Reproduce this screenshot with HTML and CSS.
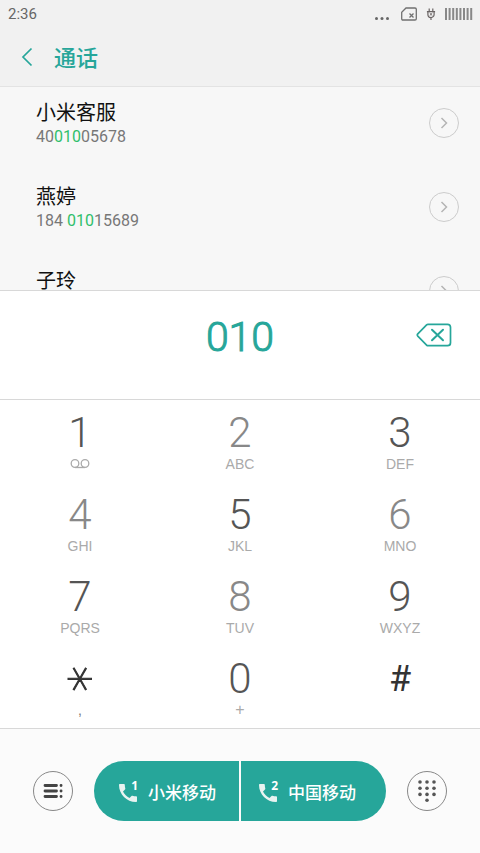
FILE: index.html
```html
<!DOCTYPE html>
<html lang="zh-CN">
<head>
<meta charset="utf-8">
<meta name="viewport" content="width=device-width, initial-scale=1">
<title>通话</title>
<link rel="stylesheet" href="styles.css">
</head>
<body>
<div class="app">
  <header class="top">
    <div class="status">
      <time>2:36</time>
      <div class="status-icons">
        <svg width="16" height="16" viewBox="0 0 16 16" fill="#666" aria-hidden="true"><circle cx="2.500" cy="12.500" r="1.500"/><circle cx="8" cy="12.500" r="1.500"/><circle cx="13.500" cy="12.500" r="1.500"/></svg>
        <svg class="sim" width="18" height="16" viewBox="0 0 18 16" fill="none" stroke="#707070" stroke-width="1.300" aria-hidden="true"><path d="M6 2h9q1.300 0 1.300 1.300v9.400q0 1.300-1.300 1.300H3q-1.300 0-1.300-1.300V6.300z"/><path d="M9.500 7.500l4 4M13.500 7.500l-4 4"/></svg>
        <svg class="plug" width="10" height="14" viewBox="0 0 10 14" fill="none" stroke="#6a6464" stroke-width="1.200" aria-hidden="true"><path d="M3.200 1.500v3M6.800 1.500v3M.9 4.600h8.200M1.900 5v2.500a3.100 3.100 0 0 0 6.200 0V5M5 10.500V13"/><path d="M3.700 6l2.600 2.600M6.300 6L3.700 8.600" stroke-width=".9"/></svg>
        <svg class="battery" width="28" height="12" viewBox="0 0 28 12" stroke="#888" stroke-width="2" aria-hidden="true"><path d="M1 0v12M4.600 0v12M8.200 0v12M11.800 0v12M15.400 0v12M19 0v12M22.600 0v12M26.200 0v12"/></svg>
      </div>
    </div>
    <div class="title-bar">
      <button class="back" type="button" aria-label="返回"><svg width="12" height="20" viewBox="0 0 12 20" fill="none" stroke="#26a69a" stroke-width="1.700"><path d="M10.500 1.500L2 10l8.500 8.500"/></svg></button>
      <h1>通话</h1>
    </div>
  </header>

  <ul class="contacts">
    <li class="contact">
      <div class="who"><span class="name">小米客服</span><span class="number">40<mark>010</mark>05678</span></div>
      <button class="detail" type="button" aria-label="详情"><svg width="8" height="12" viewBox="0 0 8 12"><path d="M1.500 1l5 5-5 5"/></svg></button>
    </li>
    <li class="contact">
      <div class="who"><span class="name">燕婷</span><span class="number">184 <mark>010</mark>15689</span></div>
      <button class="detail" type="button" aria-label="详情"><svg width="8" height="12" viewBox="0 0 8 12"><path d="M1.500 1l5 5-5 5"/></svg></button>
    </li>
    <li class="contact">
      <div class="who"><span class="name">子玲</span></div>
      <button class="detail" type="button" aria-label="详情"><svg width="8" height="12" viewBox="0 0 8 12"><path d="M1.500 1l5 5-5 5"/></svg></button>
    </li>
  </ul>

  <section class="entry">
    <output class="digits">010</output>
    <button class="erase" type="button" aria-label="删除"><svg width="36" height="24" viewBox="0 0 36 24" fill="none" stroke="#26a69a" stroke-width="1.700" stroke-linejoin="round" stroke-linecap="round"><path d="M12 1.300h19.500q3 0 3 3v15.400q0 3-3 3H12q-.8 0-1.400-.6L1.800 13.100q-1-1.100 0-2.200L10.600 1.900q.6-.6 1.400-.6z"/><path d="M16 6.700l11 10.600M27 6.700L16 17.300" stroke-width="2"/></svg></button>
  </section>

  <section class="keypad">
    <button class="key" type="button"><span class="digit">1</span><span class="sub"><svg width="20" height="10" viewBox="0 0 20 10" fill="none" stroke="#aaa" stroke-width="1.300" aria-hidden="true"><circle cx="5" cy="4.500" r="3.800"/><circle cx="15" cy="4.500" r="3.800"/><path d="M5 8.500H15"/></svg></span></button>
    <button class="key pale" type="button"><span class="digit">2</span><span class="sub">ABC</span></button>
    <button class="key" type="button"><span class="digit">3</span><span class="sub">DEF</span></button>
    <button class="key pale" type="button"><span class="digit">4</span><span class="sub">GHI</span></button>
    <button class="key" type="button"><span class="digit">5</span><span class="sub">JKL</span></button>
    <button class="key pale" type="button"><span class="digit">6</span><span class="sub">MNO</span></button>
    <button class="key" type="button"><span class="digit">7</span><span class="sub">PQRS</span></button>
    <button class="key pale" type="button"><span class="digit">8</span><span class="sub">TUV</span></button>
    <button class="key" type="button"><span class="digit">9</span><span class="sub">WXYZ</span></button>
    <button class="key" type="button"><span class="digit star"><span class="turn">*</span></span><span class="sub comma">,</span></button>
    <button class="key" type="button"><span class="digit">0</span><span class="sub plus">+</span></button>
    <button class="key" type="button"><span class="digit hash">#</span><span class="sub"></span></button>
  </section>

  <footer class="actions">
    <button class="round" type="button" aria-label="菜单"><svg width="20" height="16" viewBox="0 0 20 16" stroke="#444" stroke-width="2.800" stroke-linecap="round"><path d="M2 2.500h11.500M2 8h11.500M2 13.500h11.500M18 2.500h.1M18 8h.1M18 13.500h.1"/></svg></button>
    <div class="calls">
      <button class="call" type="button">
        <span class="phone"><svg width="20" height="20" viewBox="2 2 20 20" fill="#e8f3f1" aria-hidden="true"><path d="M7 10.500c1.400 2.800 3.700 5.100 6.500 6.500l2-2c.3-.3.700-.4 1-.3 1.100.4 2.300.5 3.500.5.600 0 1 .5 1 1V20c0 .600-.4 1-1 1C10.600 21 3 13.400 3 4c0-.600.400-1 1-1h3.800c.6 0 1 .4 1 1 0 1.200.2 2.400.5 3.500.1.400 0 .8-.3 1z"/></svg><b>1</b></span>
        <span>小米移动</span>
      </button>
      <button class="call second" type="button">
        <span class="phone"><svg width="20" height="20" viewBox="2 2 20 20" fill="#e8f3f1" aria-hidden="true"><path d="M7 10.500c1.400 2.800 3.700 5.100 6.500 6.500l2-2c.3-.3.700-.4 1-.3 1.100.4 2.300.5 3.500.5.600 0 1 .5 1 1V20c0 .600-.4 1-1 1C10.600 21 3 13.400 3 4c0-.600.400-1 1-1h3.800c.6 0 1 .4 1 1 0 1.200.2 2.400.5 3.500.1.400 0 .8-.3 1z"/></svg><b>2</b></span>
        <span>中国移动</span>
      </button>
    </div>
    <button class="round" type="button" aria-label="拨号盘"><svg width="20" height="24" viewBox="0 0 20 24" fill="#555"><circle cx="3" cy="3" r="1.800"/><circle cx="10" cy="3" r="1.800"/><circle cx="17" cy="3" r="1.800"/><circle cx="3" cy="9.200" r="1.800"/><circle cx="10" cy="9.200" r="1.800"/><circle cx="17" cy="9.200" r="1.800"/><circle cx="3" cy="15.400" r="1.800"/><circle cx="10" cy="15.400" r="1.800"/><circle cx="17" cy="15.400" r="1.800"/><circle cx="10" cy="21.300" r="1.800"/></svg></button>
  </footer>
</div>
</body>
</html>
```
FILE: styles.css
```css
* { box-sizing: border-box; }

body {
  margin: 0;
  font-family: Roboto, "Noto Sans CJK SC", sans-serif;
  color: #111;
  background: #fff;
}

button {
  border: 0;
  padding: 0;
  background: none;
  font: inherit;
  color: inherit;
}

svg { display: block; }

.app {
  display: flex;
  flex-direction: column;
  height: 100vh;
}

.top {
  background: #f1f1f1;
  border-bottom: 1px solid #e3e3e3;
}

.status {
  display: flex;
  justify-content: space-between;
  align-items: center;
  height: 28px;
  padding: 0 7px 0 8px;
  font-size: 15px;
  color: #666;
}

.status-icons { display: flex; align-items: center; }
.sim { margin-left: 10px; }
.plug { margin-left: 8px; }
.battery { margin-left: 9px; }

.title-bar {
  display: flex;
  align-items: center;
  gap: 21px;
  height: 58px;
  padding: 0 21px;
}

.title-bar h1 {
  margin: 0;
  padding-top: 4px;
  font-size: 22px;
  font-weight: 500;
  line-height: 32px;
  color: #26a69a;
}

.contacts {
  flex: 1 1 0;
  min-height: 0;
  margin: 0;
  padding: 0;
  overflow: hidden;
  list-style: none;
  background: #f7f7f7;
}

.contact {
  display: flex;
  justify-content: space-between;
  align-items: flex-start;
  height: 84px;
  padding: 13px 21px 0 36px;
}

.who { display: flex; flex-direction: column; }
.name { font-size: 20px; line-height: 26px; }
.number { font-size: 16px; line-height: 22px; color: #777; }
.number mark { background: none; color: #2fbf6b; }

.detail {
  display: grid;
  place-items: center;
  width: 30px;
  height: 30px;
  margin-top: 8px;
  border: 1px solid #ccc;
  border-radius: 50%;
}

.detail path { fill: none; stroke: #b4b4b4; stroke-width: 1.5px; }

.entry {
  display: grid;
  grid-template-columns: 1fr auto 1fr;
  align-items: center;
  height: 109px;
  padding: 0 28px 20px;
  border-top: 1px solid #d8d8d8;
}

.digits {
  grid-column: 2;
  padding-top: 4px;
  font-size: 41px;
  font-weight: 300;
  line-height: 56px;
  color: #26a69a;
  -webkit-text-stroke: 1px #26a69a;
}

.erase { justify-self: end; }

.keypad {
  display: grid;
  grid-template-columns: repeat(3, 1fr);
  grid-auto-rows: 82px;
  border-top: 1px solid #d8d8d8;
  border-bottom: 1px solid #d8d8d8;
}

.key {
  display: flex;
  flex-direction: column;
  align-items: center;
  justify-content: flex-start;
  padding-top: 9px;
  color: #555;
}

.key.pale { color: #888; }

.digit {
  height: 47px;
  font-size: 42px;
  font-weight: 300;
  line-height: 48px;
}

.sub {
  display: flex;
  align-items: center;
  height: 16px;
  font-family: "Liberation Sans", sans-serif;
  font-size: 14px;
  line-height: 16px;
  color: #aaa;
}

.plus { font-size: 16px; }
.comma { color: #777; }

.star {
  font-family: "DejaVu Sans", sans-serif;
  font-size: 52px;
  font-weight: 200;
  color: #333;
  -webkit-text-stroke: 1px #333;
}

.turn {
  display: block;
  height: 48px;
  line-height: 66px;
  transform: rotate(90deg);
}

.hash { font-size: 36px; font-weight: 400; color: #333; }

.actions {
  display: flex;
  align-items: center;
  justify-content: space-between;
  gap: 21px;
  height: 124px;
  padding: 0 33px;
  background: #fbfbfb;
}

.round {
  display: grid;
  place-items: center;
  flex: none;
  width: 40px;
  height: 40px;
  border: 1px solid #888;
  border-radius: 50%;
}

.calls {
  flex: 1;
  display: grid;
  grid-template-columns: 1fr 1fr;
  gap: 2px;
  height: 60px;
  border-radius: 30px;
  overflow: hidden;
}

.call {
  display: flex;
  align-items: center;
  gap: 10px;
  padding-left: 24px;
  background: #26a69a;
  color: #fff;
  font-size: 17px;
  font-weight: 500;
}

.second { padding-left: 17px; }

.phone { position: relative; padding-top: 4px; }

.phone b {
  position: absolute;
  top: 0;
  right: 0;
  font-family: "Open Sans", sans-serif;
  font-size: 12px;
  line-height: 14px;
}
```
